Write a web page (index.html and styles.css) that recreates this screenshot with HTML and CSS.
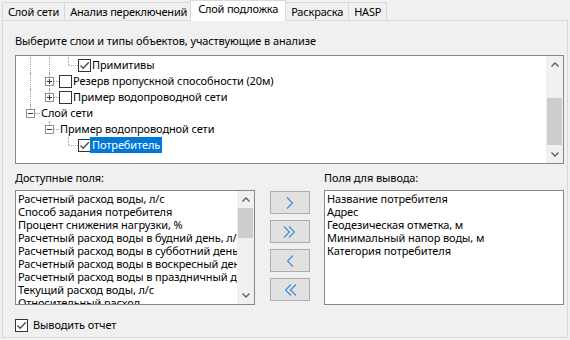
FILE: index.html
```html
<!DOCTYPE html>
<html lang="ru">
<head>
    <meta charset="UTF-8">
    <title>Слой подложка</title>
    <link rel="stylesheet" href="styles.css">
</head>
<body>
    <div class="tabs">
        <div class="tab">Слой сети</div>
        <div class="tab">Анализ переключений</div>
        <div class="tab active">Слой подложка</div>
        <div class="tab">Раскраска</div>
        <div class="tab">HASP</div>
    </div>

    <div class="panel">
        <div class="caption">Выберите слои и типы объектов, участвующие в анализе</div>

        <!-- Layer tree -->
        <div class="tree">
            <div class="tree-items">
                <div class="node">
                    <span class="indent line"></span>
                    <span class="indent line"></span>
                    <span class="indent elbow"></span>
                    <span class="check"><svg viewBox="0 0 11 11" width="11" height="11"><path d="M1.5 5.5L4.2 8.2L9.8 2.2" /></svg></span>
                    <span class="label">Примитивы</span>
                </div>
                <div class="node">
                    <span class="indent line"></span>
                    <span class="indent tee"><i class="toggle plus"></i></span>
                    <span class="check off"></span>
                    <span class="label">Резерв пропускной способности (20м)</span>
                </div>
                <div class="node">
                    <span class="indent line"></span>
                    <span class="indent elbow"><i class="toggle plus"></i></span>
                    <span class="check off"></span>
                    <span class="label">Пример водопроводной сети</span>
                </div>
                <div class="node">
                    <span class="indent elbow"><i class="toggle"></i></span>
                    <span class="label">Слой сети</span>
                </div>
                <div class="node">
                    <span class="indent"></span>
                    <span class="indent elbow"><i class="toggle"></i></span>
                    <span class="label">Пример водопроводной сети</span>
                </div>
                <div class="node">
                    <span class="indent"></span>
                    <span class="indent"></span>
                    <span class="indent elbow"></span>
                    <span class="check"><svg viewBox="0 0 11 11" width="11" height="11"><path d="M1.5 5.5L4.2 8.2L9.8 2.2" /></svg></span>
                    <span class="label selected">Потребитель</span>
                </div>
            </div>
            <div class="vscroll">
                <div class="arrow"><svg viewBox="0 0 8 5" width="8" height="5"><path d="M0.5 4.5L4 1L7.5 4.5" /></svg></div>
                <div class="track"><div class="thumb tree-thumb"></div></div>
                <div class="arrow"><svg viewBox="0 0 8 5" width="8" height="5"><path d="M0.5 0.5L4 4L7.5 0.5" /></svg></div>
            </div>
        </div>

        <!-- Field selection -->
        <div class="fields">
            <div class="field-title">Доступные поля:</div>
            <div></div>
            <div class="field-title">Поля для вывода:</div>

            <div class="listbox">
                <div class="list-items">
                    <div>Расчетный расход воды, л/с</div>
                    <div>Способ задания потребителя</div>
                    <div>Процент снижения нагрузки, %</div>
                    <div>Расчетный расход воды в будний день, л/с</div>
                    <div>Расчетный расход воды в субботний день, л/с</div>
                    <div>Расчетный расход воды в воскресный день, л/с</div>
                    <div>Расчетный расход воды в праздничный день, л/с</div>
                    <div>Текущий расход воды, л/с</div>
                    <div>Относительный расход</div>
                </div>
                <div class="vscroll">
                    <div class="arrow"><svg viewBox="0 0 8 5" width="8" height="5"><path d="M0.5 4.5L4 1L7.5 4.5" /></svg></div>
                    <div class="track"><div class="thumb list-thumb"></div></div>
                    <div class="arrow"><svg viewBox="0 0 8 5" width="8" height="5"><path d="M0.5 0.5L4 4L7.5 0.5" /></svg></div>
                </div>
            </div>

            <div class="buttons">
                <button><svg viewBox="0 0 8 12" width="8" height="12"><path d="M1 0.5L6.5 6L1 11.5" /></svg></button>
                <button><svg viewBox="0 0 14 12" width="14" height="12"><path d="M1 0.5L6.5 6L1 11.5M6 0.5L11.5 6L6 11.5" /></svg></button>
                <button><svg viewBox="0 0 8 12" width="8" height="12"><path d="M7 0.5L1.5 6L7 11.5" /></svg></button>
                <button><svg viewBox="0 0 14 12" width="14" height="12"><path d="M8 0.5L2.5 6L8 11.5M13 0.5L7.5 6L13 11.5" /></svg></button>
            </div>

            <div class="listbox">
                <div class="list-items">
                    <div>Название потребителя</div>
                    <div>Адрес</div>
                    <div>Геодезическая отметка, м</div>
                    <div>Минимальный напор воды, м</div>
                    <div>Категория потребителя</div>
                </div>
            </div>
        </div>

        <label class="report">
            <span class="check"><svg viewBox="0 0 11 11" width="11" height="11"><path d="M1.5 5.5L4.2 8.2L9.8 2.2" /></svg></span>
            <span>Выводить отчет</span>
        </label>
    </div>
</body>
</html>
```

FILE: styles.css
```css
/* Base */
* {
    box-sizing: border-box;
    margin: 0;
    padding: 0;
}

body {
    width: 570px;
    height: 340px;
    overflow: hidden;
    padding-left: 2px;
    background: #f0f0f0;
    color: #000;
    font-family: "Noto Sans", "Open Sans", sans-serif;
    font-size: 11px;
    letter-spacing: -0.1px;
    line-height: 14px;
}

/* Tabs */
.tabs {
    display: flex;
    align-items: flex-end;
    height: 20px;
    letter-spacing: -0.2px;
}

.tab {
    height: 18px;
    padding: 1px 5px 0;
    margin-right: -1px;
    border: 1px solid #d9d9d9;
    border-bottom: none;
    background: #f0f0f0;
    line-height: 16px;
    white-space: nowrap;
}

.tab.active {
    position: relative;
    z-index: 1;
    height: 21px;
    margin: 0 -1px -1px -2px;
    padding: 0 7px;
    background: #fff;
}

/* Panel */
.panel {
    width: 566px;
    height: 318px;
    padding: 13px 3px 0 12px;
    border: 1px solid #d9d9d9;
    background: #f0f0f0;
}

.caption {
    margin-bottom: 7px;
}

/* Tree */
.tree {
    display: flex;
    height: 109px;
    border: 1px solid #828790;
    background: #fff;
}

.tree-items {
    flex: 1;
    padding: 1px 0 0 5px;
    white-space: nowrap;
    overflow: hidden;
}

.node {
    display: flex;
    align-items: center;
    height: 16px;
}

.indent {
    position: relative;
    flex: none;
    width: 19px;
    height: 16px;
}

.line::before,
.tee::before,
.elbow::before {
    content: "";
    position: absolute;
    left: 9px;
    top: 0;
    bottom: 0;
    border-left: 1px dotted #a0a0a0;
}

.elbow::before {
    bottom: 8px;
}

.tee::after,
.elbow::after {
    content: "";
    position: absolute;
    left: 10px;
    right: 0;
    top: 8px;
    border-top: 1px dotted #a0a0a0;
}

.toggle {
    position: absolute;
    z-index: 1;
    left: 5px;
    top: 4px;
    width: 9px;
    height: 9px;
    border: 1px solid #919191;
    background: #fff;
}

.toggle::before {
    content: "";
    position: absolute;
    left: 1px;
    top: 3px;
    width: 5px;
    height: 1px;
    background: #1e395b;
}

.toggle.plus::after {
    content: "";
    position: absolute;
    left: 3px;
    top: 1px;
    width: 1px;
    height: 5px;
    background: #1e395b;
}

.check {
    flex: none;
    display: flex;
    align-items: center;
    justify-content: center;
    width: 13px;
    height: 13px;
    border: 1px solid #333;
    background: #fff;
}

.check svg path {
    fill: none;
    stroke: #4a4a4a;
    stroke-width: 1.3;
}

.node .label {
    height: 16px;
    padding: 1px 2px 0 1px;
}

.node .check + .label {
    margin-left: -1px;
    padding-left: 2px;
}

.label.selected {
    background: #0078d7;
    color: #fff;
}

/* Scrollbars */
.vscroll {
    flex: none;
    display: flex;
    flex-direction: column;
    width: 17px;
    background: #f0f0f0;
}

.arrow {
    display: flex;
    align-items: center;
    justify-content: center;
    height: 17px;
}

.arrow path {
    fill: none;
    stroke: #606060;
    stroke-width: 1.4;
}

.track {
    flex: 1;
}

.thumb {
    margin: 0 1px;
    background: #cdcdcd;
}

.tree-thumb {
    margin-top: 25px;
    height: 47px;
}

.list-thumb {
    height: 30px;
}

/* Fields */
.fields {
    display: grid;
    grid-template-columns: 240px 40px 240px;
    justify-content: space-between;
    margin-top: 7px;
}

.field-title {
    height: 19px;
}

.listbox {
    display: flex;
    height: 115px;
    border: 1px solid #828790;
    background: #fff;
}

.list-items {
    flex: 1;
    padding: 1px 0 0 2px;
    line-height: 13px;
    white-space: nowrap;
    overflow: hidden;
}

.buttons {
    display: flex;
    flex-direction: column;
    gap: 6px;
    padding-top: 1px;
}

.buttons button {
    display: flex;
    align-items: center;
    justify-content: center;
    height: 23px;
    border: 1px solid #adadad;
    background: #e1e1e1;
}

.buttons path {
    fill: none;
    stroke: #3c8ad8;
    stroke-width: 1.1;
}

/* Report option */
.report {
    display: flex;
    align-items: center;
    gap: 5px;
    margin-top: 13px;
}
```
